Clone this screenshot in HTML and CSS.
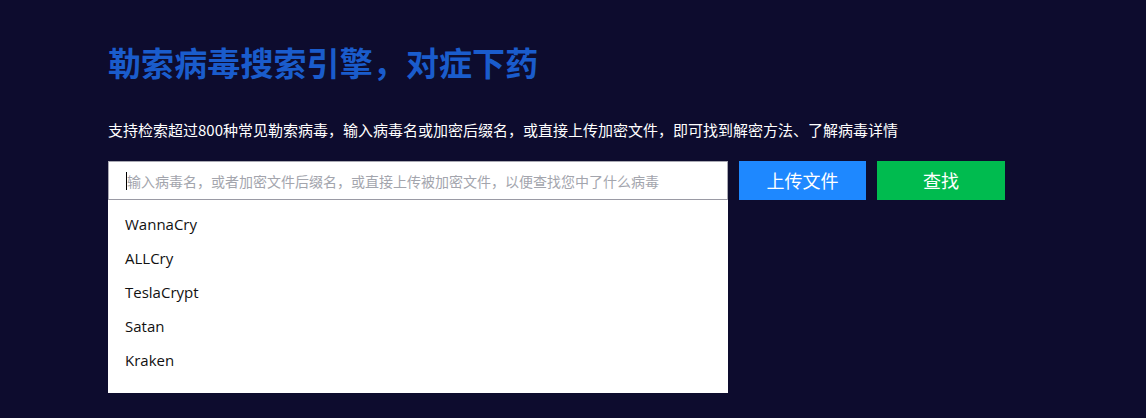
FILE: index.html
```html
<!DOCTYPE HTML>
<html lang="zh-CN">
<head>
<meta charset="UTF-8">
<title>勒索病毒搜索引擎</title>
<link rel="stylesheet" href="styles.css">
</head>
<body>
<div class="search_wrap">
	<h1 class="title">勒索病毒搜索引擎，对症下药</h1>
	<p class="desc">支持检索超过800种常见勒索病毒，输入病毒名或加密后缀名，或直接上传加密文件，即可找到解密方法、了解病毒详情</p>
	<div class="search_bar">
		<div class="search_box">
			<div class="search_input"><i class="caret"></i><span class="placeholder">输入病毒名，或者加密文件后缀名，或直接上传被加密文件，以便查找您中了什么病毒</span></div>
			<ul class="suggest">
				<li>WannaCry</li>
				<li>ALLCry</li>
				<li>TeslaCrypt</li>
				<li>Satan</li>
				<li>Kraken</li>
			</ul>
		</div>
		<a class="btn btn_upload" href="#">上传文件</a>
		<a class="btn btn_find" href="#">查找</a>
	</div>
</div>
</body>
</html>
```

FILE: styles.css
```css
html, body, div, ul, li, h1, p { margin:0; padding:0; }
body { height:418px; overflow:hidden; background-color:#0d0c2e; font:normal 14px "Noto Sans CJK SC","Noto Sans",sans-serif; }
ul li { list-style:none; }
.search_wrap { padding:34px 0 0 108px; }
.title { height:56px; font-size:33px; line-height:56px; font-weight:bold; color:#1a5ccc; letter-spacing:0.1px; }
.desc { margin-top:28px; font-size:15px; line-height:24px; color:#fff; }
.search_bar { display:flex; align-items:flex-start; gap:11px; margin-top:19px; }
.search_box { width:620px; }
.search_input { display:flex; align-items:center; height:37px; padding-left:17px; background-color:#fff; border:1px solid #a9a9b3; border-bottom-color:#9a9aa4; }
.caret { width:1px; height:18px; background-color:#000; }
.placeholder { font-size:14px; color:#a3a5ad; white-space:nowrap; }
.suggest { height:175px; padding:9px 0 9px 17px; background-color:#fff; }
.suggest li { height:34px; font-family:"Open Sans","Noto Sans CJK SC",sans-serif; font-size:15px; line-height:30px; color:#111; }
.btn { display:block; height:39px; font-size:18px; line-height:39px; color:#fff; text-align:center; text-decoration:none; }
.btn_upload { width:127px; background-color:#1e88ff; }
.btn_find { width:128px; background-color:#00bb4f; }
```
